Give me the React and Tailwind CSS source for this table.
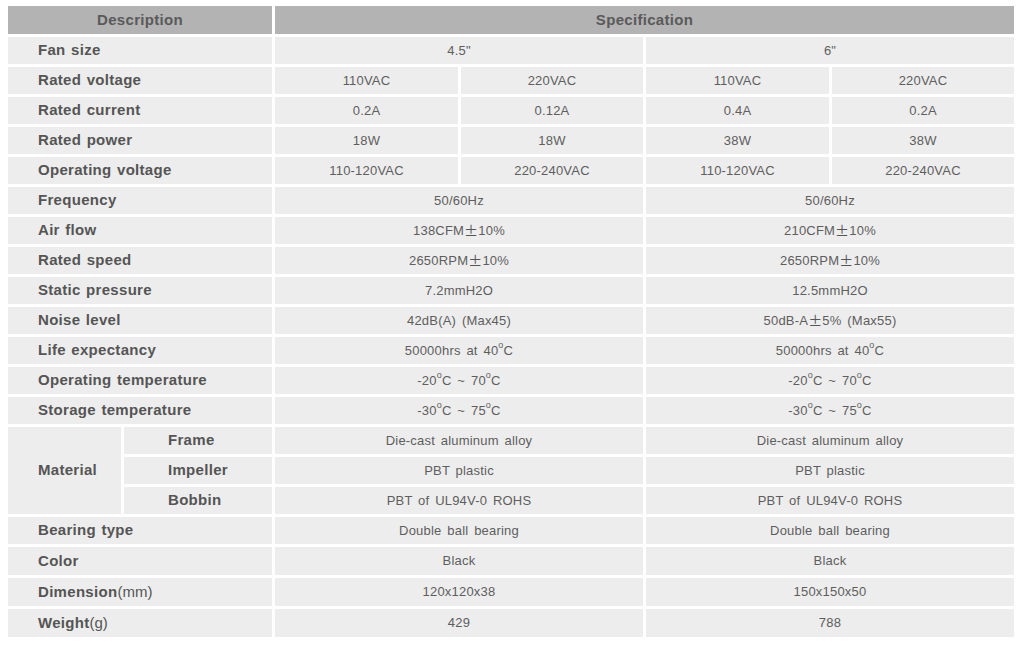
import React from 'react';

const Deg = () => <sup className="text-[9px] -top-[0.6em]">o</sup>;
const PM = () => <span className="text-[14px] text-[#555]" style={{ fontFamily: '"Noto Sans CJK SC", sans-serif' }}>±</span>;

// [label, suffix, values] — 4 values = split columns, 2 values = per fan size
const rowsTop = [
  ['Fan size', null, ['4.5"', '6"']],
  ['Rated voltage', null, ['110VAC', '220VAC', '110VAC', '220VAC']],
  ['Rated current', null, ['0.2A', '0.12A', '0.4A', '0.2A']],
  ['Rated power', null, ['18W', '18W', '38W', '38W']],
  ['Operating voltage', null, ['110-120VAC', '220-240VAC', '110-120VAC', '220-240VAC']],
  ['Frequency', null, ['50/60Hz', '50/60Hz']],
  ['Air flow', null, [<>138CFM<PM />10%</>, <>210CFM<PM />10%</>]],
  ['Rated speed', null, [<>2650RPM<PM />10%</>, <>2650RPM<PM />10%</>]],
  ['Static pressure', null, ['7.2mmH2O', '12.5mmH2O']],
  ['Noise level', null, ['42dB(A) (Max45)', <>50dB-A <PM />5% (Max55)</>]],
  ['Life expectancy', null, [<>50000hrs at 40<Deg />C</>, <>50000hrs at 40<Deg />C</>]],
  ['Operating temperature', null, [<>-20<Deg />C ~ 70<Deg />C</>, <>-20<Deg />C ~ 70<Deg />C</>]],
  ['Storage temperature', null, [<>-30<Deg />C ~ 75<Deg />C</>, <>-30<Deg />C ~ 75<Deg />C</>]],
];

const materials = [
  ['Frame', 'Die-cast aluminum alloy'],
  ['Impeller', 'PBT plastic'],
  ['Bobbin', 'PBT of UL94V-0 ROHS'],
];

const rowsBottom = [
  ['Bearing type', null, ['Double ball bearing', 'Double ball bearing']],
  ['Color', null, ['Black', 'Black']],
  ['Dimension', '(mm)', ['120x120x38', '150x150x50']],
  ['Weight', '(g)', ['429', '788']],
];

const label = 'bg-[#ededed] flex items-center font-bold text-[15px] tracking-[0.3px] [word-spacing:1px] text-[#555]';
const value = 'bg-[#ededed] flex items-center justify-center text-[13px] tracking-[0.2px] [word-spacing:2px] text-[#5e5e5e]';

const Row = ({ row }) => {
  const [name, suffix, vals] = row;
  return (
    <>
      <div className={`${label} col-span-2 pl-[30px]`}>
        {name}
        {suffix && <span className="font-normal tracking-normal">{suffix}</span>}
      </div>
      {vals.map((v, i) => (
        <div key={i} className={`${value} ${vals.length === 2 ? 'col-span-2' : ''}`}>{v}</div>
      ))}
    </>
  );
};

export default function App() {
  return (
    <div className="bg-white w-[1024px] h-[648px] pt-[6px] pl-[8px]" style={{ fontFamily: '"Liberation Sans", Arial, "Noto Sans CJK SC", sans-serif' }}>
      <div className="grid grid-cols-[113px_148px_183px_182px_183px_182px] grid-rows-[28px_repeat(17,27px)_repeat(3,28px)] gap-[3px]">
        <div className="col-span-2 bg-[#b3b3b3] flex items-center justify-center font-bold text-[15px] tracking-[0.3px] text-[#5a5a5a]">Description</div>
        <div className="col-span-4 bg-[#b3b3b3] flex items-center justify-center font-bold text-[15px] tracking-[0.3px] text-[#5a5a5a]">Specification</div>

        {rowsTop.map((r) => <Row key={r[0]} row={r} />)}

        <div className={`${label} row-span-3 pl-[30px]`}>Material</div>
        {materials.map(([m, v]) => (
          <React.Fragment key={m}>
            <div className={`${label} pl-[44px]`}>{m}</div>
            <div className={`${value} col-span-2`}>{v}</div>
            <div className={`${value} col-span-2`}>{v}</div>
          </React.Fragment>
        ))}

        {rowsBottom.map((r) => <Row key={r[0]} row={r} />)}
      </div>
    </div>
  );
}
